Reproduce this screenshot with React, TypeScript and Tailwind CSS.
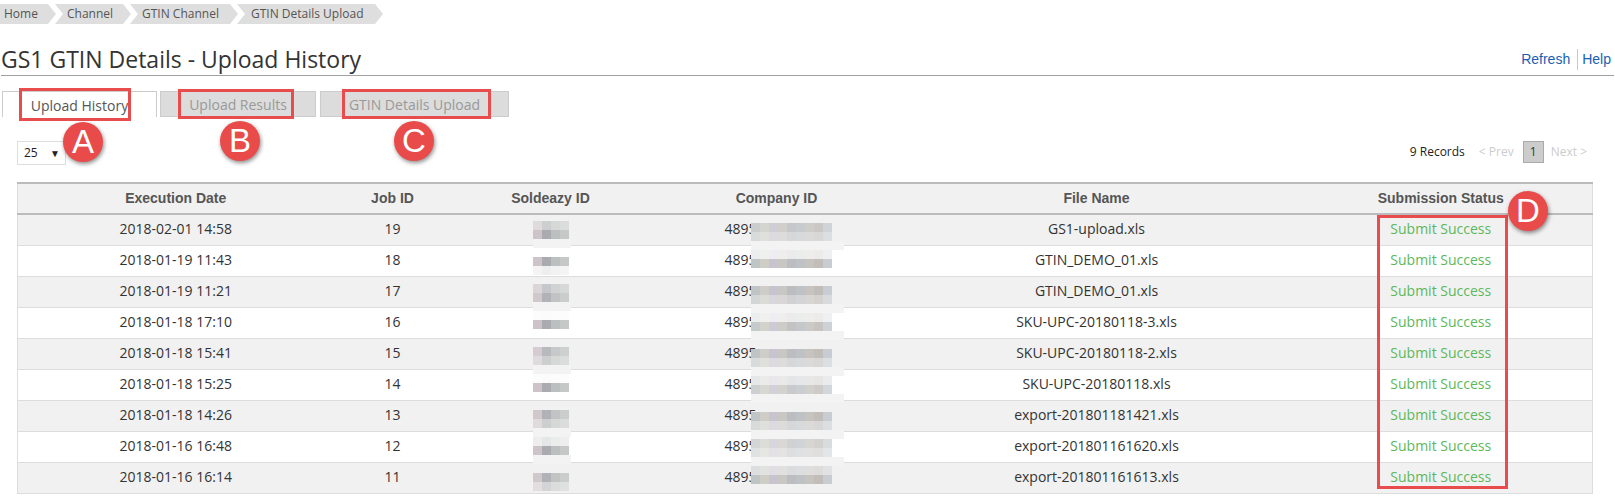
const crumbs = [
  { label: 'Home', cls: 'w-[56px] pl-[4px] [clip-path:polygon(0_0,calc(100%-8px)_0,100%_50%,calc(100%-8px)_100%,0_100%)]' },
  { label: 'Channel', cls: 'w-[76px] pl-[12px] -ml-[1px] [clip-path:polygon(0_0,calc(100%-8px)_0,100%_50%,calc(100%-8px)_100%,0_100%,8px_50%)]' },
  { label: 'GTIN Channel', cls: 'w-[108px] pl-[12px] -ml-[1px] [clip-path:polygon(0_0,calc(100%-8px)_0,100%_50%,calc(100%-8px)_100%,0_100%,8px_50%)]' },
  { label: 'GTIN Details Upload', cls: 'w-[146px] pl-[14px] -ml-[1px] [clip-path:polygon(0_0,calc(100%-8px)_0,100%_50%,calc(100%-8px)_100%,0_100%,8px_50%)]' },
];

const rows = [
  ['2018-02-01 14:58', '19', 'GS1-upload.xls'],
  ['2018-01-19 11:43', '18', 'GTIN_DEMO_01.xls'],
  ['2018-01-19 11:21', '17', 'GTIN_DEMO_01.xls'],
  ['2018-01-18 17:10', '16', 'SKU-UPC-20180118-3.xls'],
  ['2018-01-18 15:41', '15', 'SKU-UPC-20180118-2.xls'],
  ['2018-01-18 15:25', '14', 'SKU-UPC-20180118.xls'],
  ['2018-01-18 14:26', '13', 'export-201801181421.xls'],
  ['2018-01-16 16:48', '12', 'export-201801161620.xls'],
  ['2018-01-16 16:14', '11', 'export-201801161613.xls'],
];

// blurred ids: offset from the row top, then strength of each 9px strip (0 = pale band)
const soldeazyBlur = [
  { top: 6, strips: [0.5, 1, 0] },
  { top: 11, strips: [1, 0.2] },
  { top: 7, strips: [0.6, 0.9, 0] },
  { top: 3, strips: [0.05, 1] },
  { top: 8, strips: [0.8, 0.5, 0] },
  { top: 4, strips: [0.05, 1] },
  { top: 9, strips: [0.9, 0.5, 0] },
  { top: 5, strips: [0.3, 1, 0] },
  { top: 10, strips: [0.9, 0.4] },
];
const companyBlur = [
  { top: 8, strips: [0.8, 0.5, 0] },
  { top: 4, strips: [0.3, 1] },
  { top: 9, strips: [1, 0.6, 0] },
  { top: 5, strips: [0.3, 0.9, 0] },
  { top: 10, strips: [1, 0.5, 0] },
  { top: 6, strips: [0.4, 0.8, 0] },
  { top: 11, strips: [1, 0.5, 0] },
  { top: 7, strips: [0.7, 0.5, 0] },
  { top: 3, strips: [0.4, 1] },
];
const soldeazyTints = ['#cdc3c8', '#aaabb0', '#bcbfbf', '#c6c8c8'];
const companyTints = ['#bfc4c6', '#cecec7', '#c7c4cf', '#c9c7c3', '#bcbdc0', '#bec2c5', '#c7c4c0', '#c1bdb9', '#c7cdd2'];

function Mosaic({ tints, top, strips, bg, cls, bandCls }: { tints: string[]; top: number; strips: number[]; bg: string; cls: string; bandCls: string }) {
  return (
    <div className={`absolute flex flex-col items-start ${cls}`} style={{ top }}>
      {strips.map((s, i) =>
        s === 0 ? (
          <div key={i} className={`h-[9px] bg-[#f3f3f3] ${bandCls}`} />
        ) : (
          <div key={i} className="flex" style={{ backgroundColor: bg }}>
            {tints.map((t, j) => (
              <div key={j} className="h-[9px] w-[9px]" style={{ backgroundColor: t, opacity: s }} />
            ))}
          </div>
        ),
      )}
    </div>
  );
}

function Marker({ letter, cls }: { letter: string; cls: string }) {
  return (
    <div className={`absolute flex h-[40px] w-[40px] items-center justify-center rounded-full bg-[#e94b4b] text-[33px] text-white shadow-[1px_2px_4px_rgba(0,0,0,0.45)] font-['Liberation_Sans',sans-serif] ${cls}`}>
      {letter}
    </div>
  );
}

export default function App() {
  return (
    <div className="relative h-[502px] w-[1615px] overflow-hidden bg-white font-['Open_Sans',sans-serif] text-[14px] text-[#333]">
      <div className="flex pt-[4px]">
        {crumbs.map((c) => (
          <div key={c.label} className={`flex h-[20px] items-center bg-[#dedede] text-[12px] text-[#555] ${c.cls}`}>
            {c.label}
          </div>
        ))}
      </div>

      <div className="mx-[1px] mt-[21px] flex h-[31px] items-center justify-between border-b border-[#a0a0a0] pb-[2px]">
        <h1 className="text-[23px] leading-[30px] text-[#333]">GS1 GTIN Details - Upload History</h1>
        <div className="flex items-center pr-[3px] font-['Liberation_Sans',sans-serif] text-[14px] text-[#1a5fb4]">
          <span className="pr-[7px]">Refresh</span>
          <span className="border-l border-[#c8c8c8] pl-[4px]">Help</span>
        </div>
      </div>

      <div className="mt-[15px] flex pl-[2px] text-[14px]">
        <div className="flex h-[26px] w-[155px] items-center justify-center border-x border-t border-[#ccc] bg-white pt-[2px] text-[#555]">Upload History</div>
        <div className="ml-[3px] flex h-[26px] w-[156px] items-center justify-center border border-[#ccc] bg-[#dcdcdc] text-[#999]">Upload Results</div>
        <div className="ml-[4px] flex h-[26px] w-[189px] items-center justify-center border border-[#ccc] bg-[#dcdcdc] text-[#999]">GTIN Details Upload</div>
      </div>

      <div className="mt-[24px] flex items-start justify-between pl-[17px] pr-[28px] text-[12px]">
        <div className="flex h-[24px] w-[49px] items-center justify-between border border-[#ddd] pl-[6px] pr-[5px] text-[#222]">
          <span>25</span>
          <span className="text-[10px]">▼</span>
        </div>
        <div className="flex items-center">
          <span className="mr-[14px] text-[#222]">9 Records</span>
          <span className="mr-[9px] text-[#ccc]">&lt; Prev</span>
          <span className="mr-[7px] flex h-[22px] w-[21px] items-center justify-center border border-[#aaa] bg-[#ccc] text-[#333]">1</span>
          <span className="text-[#ccc]">Next &gt;</span>
        </div>
      </div>

      <table className="ml-[17px] mt-[17px] w-[1576px] table-fixed border-collapse">
        <colgroup>
          <col className="w-[316px]" />
          <col className="w-[118px]" />
          <col className="w-[198px]" />
          <col className="w-[254px]" />
          <col className="w-[386px]" />
          <col />
        </colgroup>
        <thead>
          <tr className="h-[31px] border-x border-t-2 border-b-2 border-x-[#ddd] border-t-[#bbb] border-b-[#bbb] bg-[#f1f1f1] font-['Liberation_Sans',sans-serif] text-[14px] font-bold text-[#555]">
            <th>Execution Date</th>
            <th>Job ID</th>
            <th>Soldeazy ID</th>
            <th>Company ID</th>
            <th>File Name</th>
            <th>Submission Status</th>
          </tr>
        </thead>
        <tbody>
          {rows.map((r, i) => {
            const bg = i % 2 === 0 ? '#f1f1f1' : '#ffffff';
            return (
              <tr key={r[1]} className={`h-[31px] border border-[#ddd] text-center ${i % 2 === 0 ? 'bg-[#f1f1f1]' : 'bg-white'}`}>
                <td className="pb-[2px]">{r[0]}</td>
                <td className="pb-[2px]">{r[1]}</td>
                <td className="relative">
                  <Mosaic tints={soldeazyTints} top={soldeazyBlur[i].top} strips={soldeazyBlur[i].strips} bg={bg} cls="left-[81px]" bandCls="w-[38px]" />
                </td>
                <td className="relative pb-[2px] pl-[75px] text-left">
                  4895
                  <Mosaic tints={companyTints} top={companyBlur[i].top} strips={companyBlur[i].strips} bg={bg} cls="left-[101px]" bandCls="w-[93px]" />
                </td>
                <td className="pb-[2px]">{r[2]}</td>
                <td className="pb-[2px] text-[#5cb85c]">Submit Success</td>
              </tr>
            );
          })}
        </tbody>
      </table>

      <div className="absolute left-[19px] top-[88px] h-[33px] w-[112px] border-[3px] border-[#e84c4c]" />
      <div className="absolute left-[178px] top-[89px] h-[30px] w-[116px] border-[3px] border-[#e84c4c]" />
      <div className="absolute left-[342px] top-[89px] h-[30px] w-[149px] border-[3px] border-[#e84c4c]" />
      <div className="absolute left-[1377px] top-[215px] h-[274px] w-[131px] border-[3px] border-[#e84c4c]" />
      <Marker letter="A" cls="left-[63px] top-[122px]" />
      <Marker letter="B" cls="left-[220px] top-[121px]" />
      <Marker letter="C" cls="left-[394px] top-[121px]" />
      <Marker letter="D" cls="left-[1508px] top-[191px]" />
    </div>
  );
}
